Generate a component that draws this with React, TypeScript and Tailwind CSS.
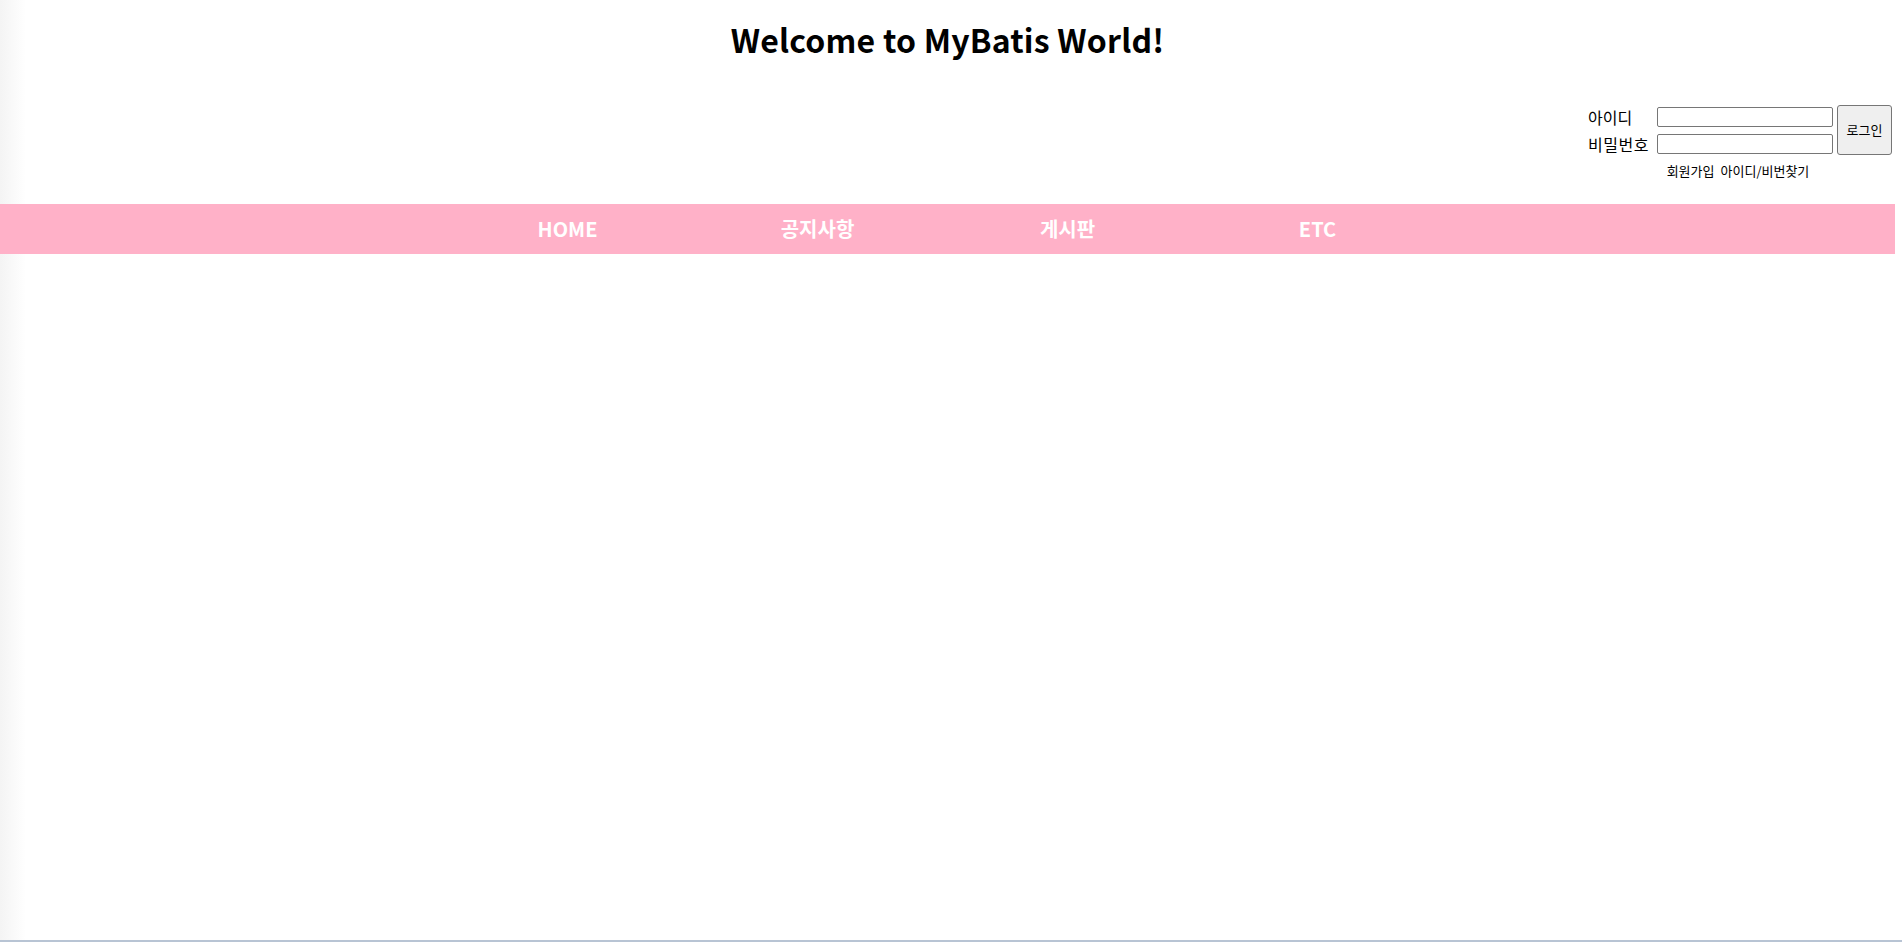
import { useState } from "react";

const menus = [
  { id: 1, title: "HOME" },
  { id: 2, title: "공지사항" },
  { id: 3, title: "게시판" },
  { id: 4, title: "ETC" },
];

const font = { fontFamily: '"Noto Sans CJK KR", "Noto Sans", sans-serif' };

const LoginBox = () => {
  const [id, setId] = useState("");
  const [pw, setPw] = useState("");

  return (
    <div className="flex flex-col items-center">
      <div className="flex items-center gap-[4px]">
        <div className="flex flex-col gap-[7px] text-[16px] leading-[20px] text-black">
          <div className="flex items-center gap-[4px]">
            <span className="w-[65px]">아이디</span>
            <input
              value={id}
              onChange={(e) => setId(e.target.value)}
              className="h-[20px] w-[176px] rounded-[2px] border border-[#767676] bg-white px-1 text-[13px]"
            />
          </div>
          <div className="flex items-center gap-[4px]">
            <span className="w-[65px] tracking-[0.5px]">비밀번호</span>
            <input
              type="password"
              value={pw}
              onChange={(e) => setPw(e.target.value)}
              className="h-[20px] w-[176px] rounded-[2px] border border-[#767676] bg-white px-1 text-[13px]"
            />
          </div>
        </div>
        <button className="h-[50px] w-[55px] rounded-[3px] border border-[#767676] bg-[#efefef] text-[13px] text-black">
          로그인
        </button>
      </div>
      <div className="mt-[8px] flex gap-[6px] pr-[4px] text-[13px] leading-[16px] text-black">
        <a href="#">회원가입</a>
        <a href="#">아이디/비번찾기</a>
      </div>
    </div>
  );
};

export default function App() {
  return (
    <div className="relative h-[942px] w-full overflow-hidden bg-white" style={font}>
      <div className="pointer-events-none absolute left-0 top-0 h-full w-[26px] bg-gradient-to-r from-[#efefef] to-white opacity-70" />
      <div className="relative w-[1895px]">
        <h1 className="pt-[19px] text-center text-[32px] font-bold leading-[40px] tracking-[0.2px] text-black">
          Welcome to MyBatis World!
        </h1>
        <div className="mt-[46px] flex justify-end pr-[3px]">
          <LoginBox />
        </div>
        <nav className="mt-[25px] flex h-[50px] items-center justify-center bg-[#ffb1c8] pr-[10px]">
          {menus.map((m) => (
            <a
              key={m.id}
              href="#"
              className="w-[250px] text-center text-[20px] font-bold text-white"
            >
              {m.title}
            </a>
          ))}
        </nav>
      </div>
      <div className="absolute bottom-0 left-0 h-[2px] w-full bg-[#b8c4d4]" />
    </div>
  );
}
